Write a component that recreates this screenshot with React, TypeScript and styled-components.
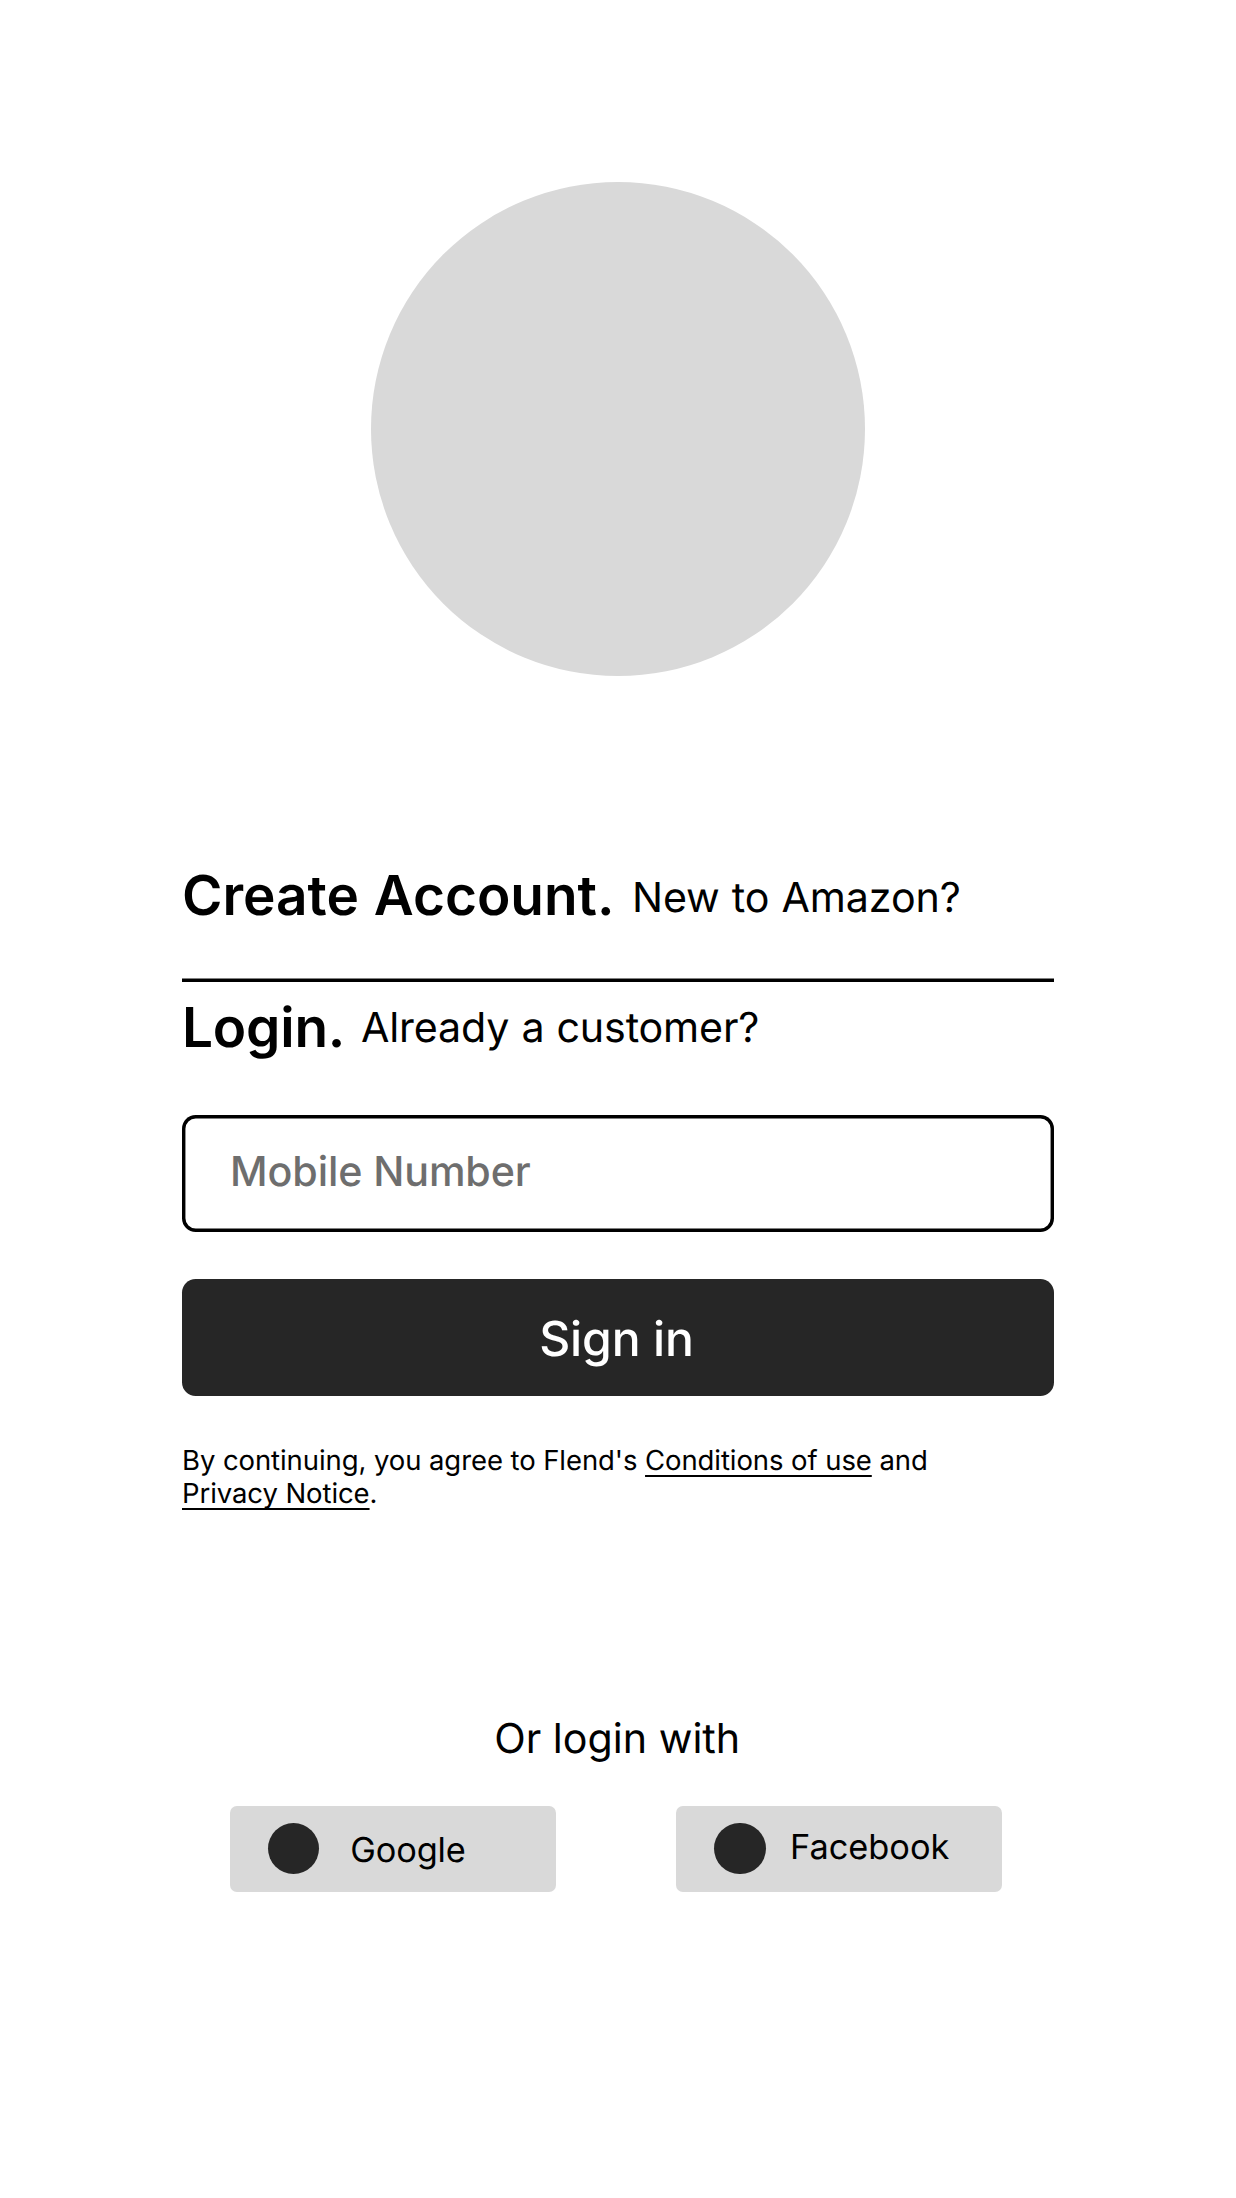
import React from "react";
import styled, { createGlobalStyle } from "styled-components";

const GlobalStyle = createGlobalStyle`
  *, *::before, *::after { box-sizing: border-box; }
  body {
    margin: 0;
    background: #fff;
    color: #000;
    font-family: Inter, "Liberation Sans", sans-serif;
    text-rendering: geometricPrecision;
  }
`;

const Screen = styled.main`
  display: flex;
  flex-direction: column;
  width: 1236px;
  height: 2198px;
  padding: 182px 182px 0;
`;

const Logo = styled.div`
  align-self: center;
  flex: none;
  width: 494.4px;
  height: 494.4px;
  border-radius: 50%;
  background: #d9d9d9;
`;

const TitleRow = styled.header<{ $top: number }>`
  display: flex;
  align-items: flex-start;
  height: 66px;
  margin-top: ${(p) => p.$top}px;
  white-space: nowrap;
`;

const Title = styled.h1<{ $width: number; $tracking: number }>`
  flex: none;
  width: ${(p) => p.$width}px;
  margin: 0;
  font-size: 54.93px;
  line-height: 66px;
  font-weight: 600;
  letter-spacing: ${(p) => p.$tracking}px;
  word-spacing: 1px;
`;

const Hint = styled.span<{ $drop: number; $tracking: number }>`
  margin-top: ${(p) => p.$drop}px;
  font-size: 41.2px;
  line-height: 50px;
  letter-spacing: ${(p) => p.$tracking}px;
  word-spacing: 0.6px;
`;

const Divider = styled.hr`
  flex: none;
  width: 872px;
  height: 4px;
  margin: 49px 0 0;
  border: 0;
  border-top: 1px solid #808080;
  background: #000;
`;

const PhoneInput = styled.input`
  flex: none;
  width: 872px;
  height: 117px;
  margin: 54px 0 0;
  padding: 0 48px 5px;
  border: 0;
  border-radius: 13.7px;
  outline: 0;
  box-shadow: inset 0 0 0 3.43px #000;
  background: #fff;
  font: 500 41.2px/50px Inter, "Liberation Sans", sans-serif;
  letter-spacing: -0.1px;
  text-rendering: inherit;
  &::placeholder {
    color: #6e6e6e;
    opacity: 1;
  }
`;

const SignIn = styled.button`
  flex: none;
  width: 872px;
  height: 117px;
  margin: 47px 0 0;
  padding: 3px 3px 0 0;
  border: 0;
  border-radius: 13.7px;
  background: #262626;
  color: #fff;
  font: 500 48.07px/58px Inter, "Liberation Sans", sans-serif;
  letter-spacing: -0.15px;
  text-rendering: inherit;
`;

const Terms = styled.p`
  width: 800px;
  height: 67px;
  margin: 48px 0 0;
  font-size: 27.47px;
  line-height: 33px;
  letter-spacing: -0.07px;
`;

const TermsLink = styled.a`
  color: inherit;
  text-decoration: underline;
  text-decoration-thickness: 2px;
  text-underline-offset: 5px;
  text-decoration-skip-ink: none;
`;

const AltLabel = styled.p`
  margin: 202px 1.5px 0 0;
  text-align: center;
  font-size: 41.2px;
  line-height: 50px;
`;

const Providers = styled.div`
  display: flex;
  justify-content: space-between;
  margin-top: 43px;
  padding: 0 51.8px 0 48px;
`;

const Provider = styled.button<{ $gap: number }>`
  display: flex;
  align-items: flex-start;
  gap: ${(p) => p.$gap}px;
  width: 326px;
  height: 86px;
  padding: 17px 0 0 37.8px;
  border: 0;
  border-radius: 6.9px;
  background: #d9d9d9;
  color: #000;
  font: 400 34.33px/42px Inter, "Liberation Sans", sans-serif;
  text-rendering: inherit;
`;

const Dot = styled.span`
  flex: none;
  width: 51.5px;
  height: 51.5px;
  border-radius: 50%;
  background: #262626;
`;

const ProviderName = styled.span<{ $drop: number; $tracking: number }>`
  margin-top: ${(p) => p.$drop}px;
  letter-spacing: ${(p) => p.$tracking}px;
`;

export default function App() {
  return (
    <>
      <GlobalStyle />
      <Screen>
        <Logo />
        <TitleRow $top={186.6}>
          <Title $width={450} $tracking={0}>Create Account.</Title>
          <Hint $drop={9} $tracking={-0.09}>New to Amazon?</Hint>
        </TitleRow>
        <Divider />
        <TitleRow $top={13}>
          <Title $width={179} $tracking={-0.2}>Login.</Title>
          <Hint $drop={7} $tracking={-0.14}>Already a customer?</Hint>
        </TitleRow>
        <PhoneInput type="tel" placeholder="Mobile Number" />
        <SignIn type="button">Sign in</SignIn>
        <Terms>
          By continuing, you agree to Flend's <TermsLink>Conditions of use</TermsLink> and
          <br />
          <TermsLink>Privacy Notice</TermsLink>.
        </Terms>
        <AltLabel>Or login with</AltLabel>
        <Providers>
          <Provider type="button" $gap={31}>
            <Dot />
            <ProviderName $drop={7} $tracking={-0.15}>Google</ProviderName>
          </Provider>
          <Provider type="button" $gap={24.5}>
            <Dot />
            <ProviderName $drop={4} $tracking={0}>Facebook</ProviderName>
          </Provider>
        </Providers>
      </Screen>
    </>
  );
}
